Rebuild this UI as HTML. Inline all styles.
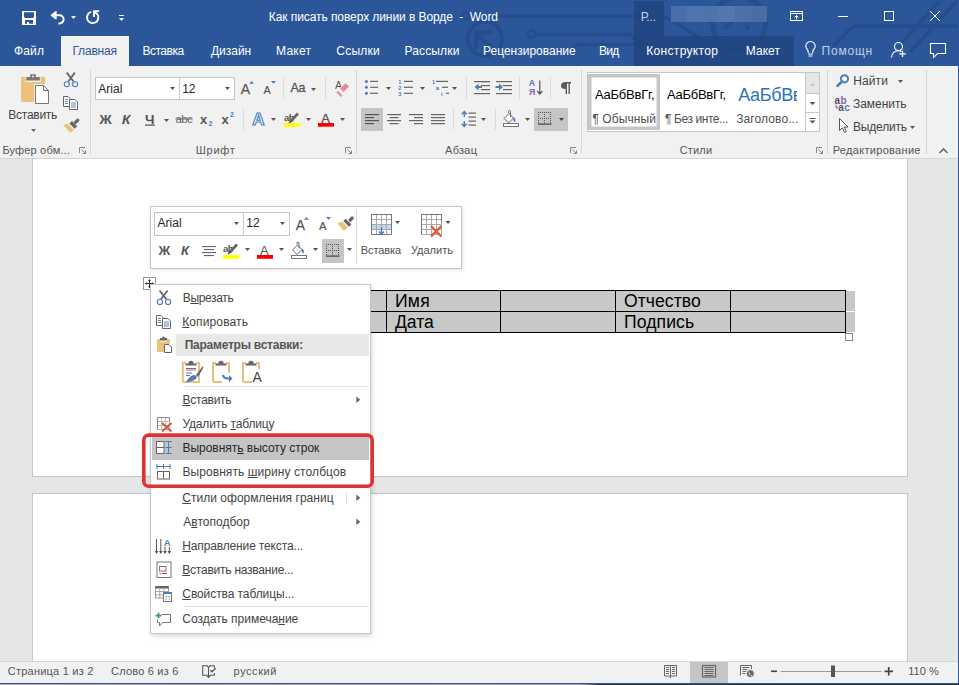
<!DOCTYPE html>
<html><head><meta charset="utf-8">
<style>
*{margin:0;padding:0;box-sizing:border-box}
html,body{width:959px;height:685px;overflow:hidden;background:#1a2a3a}
body{position:relative;font-family:"Liberation Sans",sans-serif;font-size:12px;color:#444}
.a{position:absolute}
.t{position:absolute;white-space:pre}
svg{position:absolute;overflow:visible}
</style></head><body>

<div class="a" style="left:0;top:0;width:959px;height:66px;background:#2b579a"></div>
<svg style="left:0;top:0" width="959" height="66" viewBox="0 0 959 66">
 <g fill="none" stroke="#254d8b" stroke-width="3.5">
  <circle cx="465.6" cy="16.3" r="3.6" stroke-width="2.6"/>
  <path d="M469.2,16.3 H663.7 L712,45"/>
  <circle cx="485" cy="38.8" r="17.2" stroke-width="3.6"/>
  <path d="M477.5,34 L497,53.5" stroke-width="4"/>
  <path d="M476,49 V32.5 H492.5" stroke-width="4"/>
  <circle cx="531.3" cy="34.4" r="3.6" stroke-width="2.6"/>
  <path d="M534.9,34.4 H630 L641,44.6 H668.8"/>
  <path d="M573,48 Q576,44.6 582,44.6 H641"/>
  <circle cx="672.5" cy="44.6" r="3.6" stroke-width="2.6"/>
  <circle cx="739" cy="23.5" r="26.5" stroke-width="5"/>
  <path d="M724,29 L738.8,14.5" stroke-width="5"/>
  <rect x="745" y="25" width="5" height="5" fill="#254d8b" stroke="none"/>
  <path d="M959,26.2 H853 L833,46.4"/>
  <path d="M939.5,1 L901,43.5"/>
  <path d="M957,1 L909.5,52.5"/>
 </g>
</svg>
<svg style="left:0;top:0" width="959" height="66" viewBox="0 0 959 66">
 <path d="M634,1 H664 V36 H794 V66 H634 Z" fill="#1f4580" fill-opacity="0.8"/>
</svg>
<div class="a" style="left:671px;top:6px;width:96px;height:16px;background:#4c70aa;overflow:hidden">
 <div class="a" style="left:0;top:0;width:16px;height:16px;background:#4a6ea9"></div>
 <div class="a" style="left:16px;top:0;width:16px;height:16px;background:#5074ae"></div>
 <div class="a" style="left:32px;top:0;width:16px;height:16px;background:#4f73ac"></div>
 <div class="a" style="left:48px;top:0;width:16px;height:16px;background:#5377b0"></div>
 <div class="a" style="left:64px;top:0;width:16px;height:16px;background:#4d70a8"></div>
 <div class="a" style="left:80px;top:0;width:16px;height:16px;background:#4b6da5"></div>
</div>
<!-- QAT -->
<svg style="left:0;top:0" width="130" height="36" viewBox="0 0 130 36">
 <path d="M22,11 H36 V25 H22 Z M24,12.2 V17 L25,18 H33 L34,17 V12.2 Z M25,20 V23.8 H27 V22 H29 V23.8 H33 V20 Z" fill="#fff" fill-rule="evenodd"/>
 <g fill="none" stroke="#fff" stroke-width="2">
  <path d="M56.2,11.8 L52,15.2 L56.2,18.6"/>
  <path d="M52.5,15.2 H59.5 A4.1,4.1 0 0 1 59.5,23.4 H58.5"/>
  <path d="M91.3,11.9 A5.7,5.7 0 1 0 97.4,14.2 L94.3,11.6" stroke-width="1.9"/>
  <path d="M94,17 V11.1 H99.2" stroke-width="1.9"/>
 </g>
 <path d="M51,15.2 L56.5,10.8 V19.6 Z" fill="#fff"/>
 <path d="M71,16 H76 L73.5,19 Z" fill="#fff"/>
 <rect x="119" y="15" width="5" height="1" fill="#fff"/>
 <path d="M119,18 H124 L121.5,21 Z" fill="#fff"/>
</svg>
<!-- window buttons -->
<svg style="left:780px;top:0" width="179" height="36" viewBox="780 0 179 36">
 <g fill="none" stroke="#fff" stroke-width="1">
  <rect x="790.5" y="11.5" width="12" height="9"/>
  <path d="M790.5,13.5 H802.5"/>
  <path d="M796.5,19.5 V15.5 M794.5,17.5 L796.5,15.5 L798.5,17.5"/>
  <path d="M838,16.5 H848"/>
  <rect x="884.5" y="11.5" width="9" height="9"/>
  <path d="M930,11 L940,21 M940,11 L930,21"/>
 </g>
</svg>

<div class="a" style="left:61px;top:36px;width:68px;height:30px;background:#f1f1f1"></div>
<svg style="left:800px;top:36px" width="159" height="30" viewBox="800 36 159 30">
 <g fill="none" stroke="#fff" stroke-width="1.1">
  <path d="M808.2,53 V51.5 C808.2,49.5 805.8,48.5 805.8,46.2 A4.7,4.7 0 0 1 815.2,46.2 C815.2,48.5 812.8,49.5 812.8,51.5 V53"/>
  <path d="M808,54 H813 M808.5,56 H812.5"/>
  <circle cx="898.5" cy="46.5" r="4"/>
  <path d="M891.5,57.5 C892,53.5 894.5,51 898,50.8 C899.5,50.8 900.5,51.2 901.5,51.8"/>
  <path d="M902.5,50.5 V57 M899.3,53.8 H905.8" stroke-width="1.3"/>
  <path d="M930.5,43.5 H945.5 V53.5 H937.5 L933.5,57.5 V53.5 H930.5 Z"/>
 </g>
</svg>

<div class="a" style="left:0;top:66px;width:958px;height:92px;background:#f1f1f1"></div>
<div class="a" style="left:0;top:158px;width:958px;height:1px;background:#d5d5d5"></div>
<div class="a" style="left:0;top:159px;width:958px;height:502px;background:#e6e6e6"></div>
<div class="a" style="left:32px;top:159px;width:876px;height:318px;background:#fff;border:1px solid #c6c6c6;border-top:none"></div>
<div class="a" style="left:32px;top:493px;width:876px;height:168px;background:#fff;border:1px solid #c6c6c6;border-bottom:none"></div>
<div class="a" style="left:0;top:661px;width:958px;height:22px;background:#f1f1f1;border-top:1px solid #d5d5d5"></div>
<div class="a" style="left:0;top:683px;width:959px;height:1px;background:#2b579a"></div>
<div class="a" style="left:0;top:684px;width:959px;height:1px;background:linear-gradient(90deg,#b3afa8 0,#a8a8a8 580px,#2a3642 600px,#22303c 959px)"></div>
<div class="a" style="left:958px;top:0;width:1px;height:684px;background:#2b579a"></div>
<svg style="left:0;top:66px" width="959" height="92" viewBox="0 66 959 92"><rect x="90" y="70" width="1" height="84" fill="#d6d6d6"/>
<rect x="356" y="70" width="1" height="84" fill="#d6d6d6"/>
<rect x="581" y="70" width="1" height="84" fill="#d6d6d6"/>
<rect x="827" y="70" width="1" height="84" fill="#d6d6d6"/>
<rect x="926" y="70" width="1" height="84" fill="#d6d6d6"/>
<rect x="243" y="108" width="1" height="22" fill="#dcdcdc"/>
<rect x="283" y="77" width="1" height="22" fill="#dcdcdc"/>
<rect x="325" y="77" width="1" height="22" fill="#dcdcdc"/>
<rect x="466" y="77" width="1" height="22" fill="#dcdcdc"/>
<rect x="453" y="108" width="1" height="22" fill="#dcdcdc"/>
<rect x="519" y="77" width="1" height="22" fill="#dcdcdc"/>
<rect x="550" y="77" width="1" height="22" fill="#dcdcdc"/>
<rect x="495" y="108" width="1" height="22" fill="#dcdcdc"/>
<g fill="none" stroke="#888" stroke-width="1"><path d="M79.5,153 V147.5 H85"/><path d="M81.5,149.5 L85.5,153.5 M85.5,150.5 V153.5 H82.5"/></g>
<g fill="none" stroke="#888" stroke-width="1"><path d="M345.5,153 V147.5 H351"/><path d="M347.5,149.5 L351.5,153.5 M351.5,150.5 V153.5 H348.5"/></g>
<g fill="none" stroke="#888" stroke-width="1"><path d="M570.5,153 V147.5 H576"/><path d="M572.5,149.5 L576.5,153.5 M576.5,150.5 V153.5 H573.5"/></g>
<g fill="none" stroke="#888" stroke-width="1"><path d="M816.5,153 V147.5 H822"/><path d="M818.5,149.5 L822.5,153.5 M822.5,150.5 V153.5 H819.5"/></g>
<path d="M939.5,153 L943.5,149 L947.5,153" fill="none" stroke="#666" stroke-width="1.6"/>

<path d="M22.5,76.8 H25.5 V82 H40.7 V76.8 H43.6 Q45.1,76.8 45.1,78.3 V84 H34 V101.9 H22.5 Q21,101.9 21,100.4 V78.3 Q21,76.8 22.5,76.8 Z" fill="#eac27a"/>
<path d="M26.2,77 H30.2 V74.3 H35.8 V77 H39.8 V80.6 H26.2 Z" fill="#777"/>
<circle cx="33" cy="76.6" r="1" fill="#f1f1f1"/>
<path d="M35.5,85.5 H43.5 L48.5,90.5 V103.5 H35.5 Z" fill="#fff" stroke="#777" stroke-width="1"/>
<path d="M43.5,85.5 V90.5 H48.5" fill="none" stroke="#777" stroke-width="1"/>

<path d="M31,129 h5 l-2.5,3 z" fill="#666"/>

<path d="M66.7,72.6 L73.5,81.5 M74.9,72.6 L68.2,81.5" stroke="#666" stroke-width="1.8" fill="none"/>
<circle cx="66.8" cy="84.2" r="2.5" fill="none" stroke="#4a7ebb" stroke-width="1.1"/>
<circle cx="75.1" cy="84.2" r="2.5" fill="none" stroke="#4a7ebb" stroke-width="1.1"/>


<path d="M63.5,96.5 H68 L70,98.5 V106.5 H63.5 Z" fill="#fff" stroke="#666" stroke-width="1"/>
<path d="M69.5,99.5 H75 L77.5,102 V109.5 H69.5 Z" fill="#fff" stroke="#666" stroke-width="1"/>
<path d="M65,99.5 h3 M65,101.5 h3 M65,103.5 h3 M71,103 h5 M71,105 h5 M71,107 h5" stroke="#4a7ebb" stroke-width="0.9"/>


<path d="M75.6,122.3 L77.8,120.1" stroke="#666" stroke-width="3.2" stroke-linecap="round"/>
<path d="M69.4,123.5 L72,121 L77.2,126.2 L74.6,128.7 Z" fill="#666"/>
<path d="M63.3,125.3 L67.6,123.7 L73.9,129.9 L70.3,132.7 Z" fill="#eac27a"/>

<rect x="95.5" y="77.5" width="84" height="22" fill="#fff" stroke="#c6c6c6"/>
<rect x="179.5" y="77.5" width="55" height="22" fill="#fff" stroke="#c6c6c6"/>
<path d="M170,87 h5 l-2.5,3 z" fill="#555"/>
<path d="M225,87 h5 l-2.5,3 z" fill="#555"/>

<text x="240.8" y="94.2" font-family="Liberation Sans" font-size="14" fill="#555" stroke="#555" stroke-width="0.25">A</text>
<path d="M249.2,83.8 L251.6,81 L254,83.8 Z" fill="#4a7ebb"/>
<text x="263.6" y="94.2" font-family="Liberation Sans" font-size="10.8" fill="#555" stroke="#555" stroke-width="0.2">A</text>
<path d="M271,81 H276 L273.5,83.8 Z" fill="#4a7ebb"/>

<text x="290.5" y="92" font-family="Liberation Sans" font-size="12.5" fill="#555" stroke="#555" stroke-width="0.3" letter-spacing="-0.3">Aa</text>
<path d="M311,88 h5 l-2.5,3 z" fill="#555"/>

<text x="335" y="89" font-family="Liberation Sans" font-size="10.5" fill="#555">A</text>
<path d="M339.8,88.6 L345.6,82.8 L349.4,86.6 L343.6,92.4 Z" fill="#e5899a" stroke="#f1f1f1" stroke-width="0.8"/>
<path d="M336.3,92.3 L337.8,90.8 L342.5,95.5 L341,97 Z" fill="#e5899a"/>


<text x="99.5" y="123.5" font-family="Liberation Sans" font-size="13.5" font-weight="700" fill="#555">Ж</text>
<text x="122" y="123.5" font-family="Liberation Sans" font-size="13.5" font-weight="700" font-style="italic" fill="#555">К</text>
<text x="145" y="123.5" font-family="Liberation Sans" font-size="13.5" font-weight="700" fill="#555">Ч</text>
<rect x="145" y="124.5" width="10" height="1.2" fill="#555"/>
<text x="175.5" y="123" font-family="Liberation Sans" font-size="11.5" fill="#666" letter-spacing="-0.6">abc</text>
<rect x="175.5" y="118.5" width="17" height="1" fill="#666"/>
<text x="200" y="123.5" font-family="Liberation Sans" font-size="13" font-weight="700" fill="#555">x</text>
<text x="208.5" y="125.5" font-family="Liberation Sans" font-size="7" font-weight="700" fill="#4a7ebb">2</text>
<text x="221.5" y="123.5" font-family="Liberation Sans" font-size="13" font-weight="700" fill="#555">x</text>
<text x="230" y="117" font-family="Liberation Sans" font-size="7" font-weight="700" fill="#4a7ebb">2</text>

<path d="M164,119 h5 l-2.5,3 z" fill="#555"/>

<text x="252.3" y="125.3" font-family="Liberation Sans" font-size="17" font-weight="700" fill="#fff" stroke="#4a7ebb" stroke-width="1.1">A</text>

<path d="M271,118 h5 l-2.5,3 z" fill="#555"/>

<text x="284" y="120.5" font-family="Liberation Sans" font-size="9.5" font-weight="700" fill="#555" letter-spacing="-0.5">ab</text>
<path d="M290.5,121.5 L298,113.5" stroke="#666" stroke-width="2.6"/>
<path d="M289,123 L291.5,120.5" stroke="#444" stroke-width="1.5"/>
<rect x="284" y="123" width="16.3" height="3.7" fill="#ffff00"/>

<path d="M306,118 h5 l-2.5,3 z" fill="#555"/>

<text x="321.3" y="122.5" font-family="Liberation Sans" font-size="13" fill="#555" stroke="#555" stroke-width="0.3">A</text>
<rect x="318" y="123" width="16" height="3.7" fill="#ff0000"/>

<path d="M340,118 h5 l-2.5,3 z" fill="#555"/>
<circle cx="366.4" cy="81.4" r="1.5" fill="#4a7ebb"/><circle cx="366.4" cy="87.3" r="1.5" fill="#4a7ebb"/><circle cx="366.4" cy="93.3" r="1.5" fill="#4a7ebb"/>
<rect x="370" y="80.8" width="8" height="1.2" fill="#666"/><rect x="370" y="86.7" width="8" height="1.2" fill="#666"/><rect x="370" y="92.7" width="8" height="1.2" fill="#666"/>
<path d="M386,87 h5 l-2.5,3 z" fill="#555"/>
<text x="398.3" y="84" font-family="Liberation Sans" font-size="5.5" font-weight="700" fill="#4a7ebb">1</text><text x="398.3" y="90" font-family="Liberation Sans" font-size="5.5" font-weight="700" fill="#4a7ebb">2</text><text x="398.3" y="96" font-family="Liberation Sans" font-size="5.5" font-weight="700" fill="#4a7ebb">3</text>
<rect x="404" y="80.8" width="9" height="1.2" fill="#666"/><rect x="404" y="86.7" width="9" height="1.2" fill="#666"/><rect x="404" y="92.7" width="9" height="1.2" fill="#666"/>
<path d="M420,87 h5 l-2.5,3 z" fill="#555"/>
<text x="432" y="84" font-family="Liberation Sans" font-size="5.5" font-weight="700" fill="#4a7ebb">1</text><text x="435.8" y="90" font-family="Liberation Sans" font-size="6" font-weight="700" fill="#4a7ebb">a</text><text x="441" y="96" font-family="Liberation Sans" font-size="5.5" font-weight="700" fill="#4a7ebb">i</text>
<rect x="436" y="80.8" width="12" height="1.2" fill="#666"/><rect x="442" y="86.7" width="6" height="1.2" fill="#666"/><rect x="446" y="92.7" width="3" height="1.2" fill="#666"/>
<path d="M452,87 h5 l-2.5,3 z" fill="#555"/>
<rect x="481" y="81" width="9" height="1.2" fill="#666"/><rect x="481" y="85" width="9" height="1.2" fill="#666"/><rect x="481" y="89" width="9" height="1.2" fill="#666"/><rect x="474" y="93" width="16" height="1.2" fill="#666"/>
<rect x="474" y="81" width="16" height="1.2" fill="#666"/>
<path d="M474.5,87 L478.5,83.5 V86 H482 V88 H478.5 V90.5 Z" fill="#4a7ebb"/>
<rect x="503" y="85" width="9" height="1.2" fill="#666"/><rect x="503" y="89" width="9" height="1.2" fill="#666"/><rect x="496" y="81" width="16" height="1.2" fill="#666"/><rect x="496" y="93" width="16" height="1.2" fill="#666"/>
<path d="M503,87 L499,83.5 V86 H495.5 V88 H499 V90.5 Z" fill="#4a7ebb"/>
<text x="528.8" y="86.4" font-family="Liberation Sans" font-size="8.8" font-weight="700" fill="#4a7ebb">A</text><text x="529" y="94.8" font-family="Liberation Sans" font-size="8.8" font-weight="700" fill="#8a5bb5">Я</text>
<path d="M539.8,80.5 V94 M537.2,91 L539.8,94 L542.4,91" fill="none" stroke="#555" stroke-width="1.2"/>
<path d="M566,82 H571 V83.4 H569.9 V94 H568.5 V83.4 H567 V94 H565.6 V89 Q561,89 561,85.5 Q561,82 566,82 Z" fill="#5a5a5a"/>
<rect x="361" y="108" width="22" height="23" fill="#c5c5c5"/>
<rect x="365" y="114" width="14" height="1.2" fill="#555"/><rect x="365" y="120" width="14" height="1.2" fill="#555"/><rect x="365" y="117" width="9" height="1.2" fill="#555"/><rect x="365" y="123" width="9" height="1.2" fill="#555"/>
<rect x="387" y="114" width="14" height="1.2" fill="#666"/><rect x="387" y="120" width="14" height="1.2" fill="#666"/><rect x="389.5" y="117" width="9" height="1.2" fill="#666"/><rect x="389.5" y="123" width="9" height="1.2" fill="#666"/>
<rect x="409" y="114" width="14" height="1.2" fill="#666"/><rect x="409" y="120" width="14" height="1.2" fill="#666"/><rect x="414" y="117" width="9" height="1.2" fill="#666"/><rect x="414" y="123" width="9" height="1.2" fill="#666"/>
<rect x="431" y="114" width="14" height="1.2" fill="#666"/><rect x="431" y="117" width="14" height="1.2" fill="#666"/><rect x="431" y="120" width="14" height="1.2" fill="#666"/><rect x="431" y="123" width="14" height="1.2" fill="#666"/>
<rect x="468.5" y="112.5" width="7.5" height="1.2" fill="#666"/><rect x="468.5" y="116.5" width="7.5" height="1.2" fill="#666"/><rect x="468.5" y="120.5" width="7.5" height="1.2" fill="#666"/><rect x="468.5" y="124.5" width="7.5" height="1.2" fill="#666"/>
<path d="M464.3,111.8 V117 M464.3,121 V126.2 M461.8,114.3 L464.3,111.6 L466.8,114.3 M461.8,123.7 L464.3,126.4 L466.8,123.7" fill="none" stroke="#4a7ebb" stroke-width="1.4"/>
<path d="M481,118 h5 l-2.5,3 z" fill="#555"/>
<path d="M504,118.5 L509,113.5 L513.5,118 L508.5,123 Z" fill="#fff" stroke="#666" stroke-width="1"/>
<path d="M508.5,113 V111.5 Q508.5,110.5 509.5,110.5 Q510.5,110.5 510.5,111.5 V117" fill="none" stroke="#666" stroke-width="1"/>
<path d="M513.5,117 Q516.5,119 515,122 Q512.5,121 513.5,117 Z" fill="#4a7ebb"/>
<rect x="503.5" y="123.5" width="15" height="3" fill="#fff" stroke="#777"/>
<path d="M525,118 h5 l-2.5,3 z" fill="#555"/>
<rect x="534" y="108" width="34" height="23" fill="#c5c5c5"/>
<g fill="none" stroke="#555" stroke-width="1" stroke-dasharray="1,1"><path d="M538.5,112 V124 M550.5,112 V124 M538,112.5 H551 M544.5,112 V124 M538,118.5 H551"/></g>
<rect x="538" y="123.5" width="13.5" height="1.2" fill="#444"/>
<path d="M559,118 h5 l-2.5,3 z" fill="#444"/>
<rect x="587.5" y="72.5" width="232" height="59" fill="#fff" stroke="#c6c6c6"/>
<rect x="589.75" y="75.75" width="68.5" height="52.5" fill="none" stroke="#c6c6c6" stroke-width="3.5"/>
<rect x="805.5" y="72.5" width="14" height="59" fill="#fff" stroke="#c6c6c6"/>
<rect x="806" y="73" width="13" height="20" fill="#e6e6e6"/>
<path d="M805.5,93.5 H819.5 M805.5,112.5 H819.5" stroke="#c6c6c6"/>
<path d="M809.5,86 L812.5,83 L815.5,86 Z" fill="#c6c6c6"/>
<path d="M809.5,102 H815.5 L812.5,105 Z" fill="#555"/>
<rect x="809.5" y="118" width="6" height="1" fill="#555"/><path d="M809.5,120.5 H815.5 L812.5,123.5 Z" fill="#555"/>
<circle cx="844.5" cy="78.8" r="3.6" fill="none" stroke="#4a7ebb" stroke-width="2"/><path d="M842,81.6 L837.5,85.8" stroke="#4a7ebb" stroke-width="2.6" stroke-linecap="round"/>
<path d="M898,80 h5 l-2.5,3 z" fill="#555"/>
<text x="834.5" y="103.5" font-family="Liberation Sans" font-size="10" font-weight="700" fill="#555">a</text><text x="840.6" y="103.5" font-family="Liberation Sans" font-size="10" font-weight="700" fill="#8a5bb5">b</text><text x="838.3" y="110.5" font-family="Liberation Sans" font-size="10" font-weight="700" fill="#555">a</text><text x="844.2" y="110.5" font-family="Liberation Sans" font-size="10" font-weight="700" fill="#4a7ebb">c</text>
<path d="M836,104.5 V107.5 H838 M836.6,106.6 L838,107.5 L836.6,108.4" fill="none" stroke="#4a7ebb" stroke-width="0.9"/>
<path d="M839.5,118.5 V130.5 L842.3,127.8 L844.5,132.5 L846.3,131.6 L844.1,127 H848 Z" fill="#fff" stroke="#555" stroke-width="1"/>
<path d="M910,126 h5 l-2.5,3 z" fill="#555"/></svg><div class="a" style="left:737px;top:80px;width:60px;height:28px;overflow:hidden"><div class="t" style="left:1.2px;top:5.5px;font-size:18px;line-height:18px;color:#2e74b5;letter-spacing:-0.35px">АаБбВвГг</div></div><div class="a" style="left:150px;top:284px;width:221px;height:350px;box-shadow:1px 2px 5px rgba(0,0,0,0.16)"></div><div class="a" style="left:150px;top:206px;width:312px;height:63px;box-shadow:1px 1px 4px rgba(0,0,0,0.12)"></div><svg style="left:0;top:159px" width="958" height="502" viewBox="0 159 958 502"><rect x="271" y="290" width="574" height="42" fill="#c8c8c8"/>
<g fill="#000">
<rect x="271" y="290" width="575" height="1"/>
<rect x="271" y="311" width="575" height="1"/>
<rect x="271" y="332" width="575" height="1"/>
<rect x="386" y="290" width="1" height="43"/>
<rect x="500" y="290" width="1" height="43"/>
<rect x="615" y="290" width="1" height="43"/>
<rect x="730" y="290" width="1" height="43"/>
<rect x="845" y="290" width="1" height="43"/>
</g>
<rect x="846" y="291" width="9" height="20" fill="#c8c8c8"/><rect x="846" y="312" width="9" height="20" fill="#c8c8c8"/>
<rect x="845.5" y="333.5" width="7" height="7" fill="#fff" stroke="#888"/>
<rect x="143.5" y="277.5" width="12" height="12" fill="#fff" stroke="#999"/>
<path d="M149.5,279.5 V288 M145.5,283.5 H153.5" stroke="#333" stroke-width="1"/><path d="M148,281 L149.5,279.3 L151,281 Z M148,286 L149.5,287.7 L151,286 Z M147,282 L145.3,283.5 L147,285 Z M152,282 L153.7,283.5 L152,285 Z" fill="#333"/>
<rect x="150.5" y="206.5" width="311" height="62" fill="#fff" stroke="#c6c6c6"/>
<rect x="154.5" y="212.5" width="89" height="23" fill="#fff" stroke="#c6c6c6"/>
<rect x="243.5" y="212.5" width="46" height="23" fill="#fff" stroke="#c6c6c6"/>
<path d="M234,222 h5 l-2.5,3 z" fill="#555"/>
<path d="M280,222 h5 l-2.5,3 z" fill="#555"/>

<text x="295.8" y="230" font-family="Liberation Sans" font-size="13.8" fill="#555" stroke="#555" stroke-width="0.25">A</text>
<path d="M303.8,219.8 L306.4,216.9 L309,219.8 Z" fill="#4a7ebb"/>
<text x="318.9" y="230" font-family="Liberation Sans" font-size="11.2" fill="#555" stroke="#555" stroke-width="0.2">A</text>
<path d="M326,216.9 H331 L328.5,219.8 Z" fill="#4a7ebb"/>
<path d="M350.2,220 L352.2,218" stroke="#666" stroke-width="3.2" stroke-linecap="round"/>
<path d="M343.3,221.1 L345.6,218.8 L351.3,224.5 L349,226.8 Z" fill="#666"/>
<path d="M337.2,223.5 L342,221.5 L347.8,227.3 L344,231 Z" fill="#eac27a"/>


<text x="158.5" y="255" font-family="Liberation Sans" font-size="13" font-weight="700" fill="#555">Ж</text>
<text x="181" y="255" font-family="Liberation Sans" font-size="13" font-weight="700" font-style="italic" fill="#555">К</text>

<rect x="202" y="246" width="14" height="1.1" fill="#666"/><rect x="204" y="249" width="10" height="1.1" fill="#666"/><rect x="202" y="252" width="14" height="1.1" fill="#666"/><rect x="204" y="255" width="10" height="1.1" fill="#666"/>

<text x="223" y="251.5" font-family="Liberation Sans" font-size="9.5" font-weight="700" fill="#555" letter-spacing="-0.5">ab</text>
<path d="M229.5,252.5 L237,244.5" stroke="#666" stroke-width="2.6"/>
<path d="M228,254 L230.5,251.5" stroke="#444" stroke-width="1.5"/>
<rect x="223" y="255" width="16.3" height="3.8" fill="#ffff00"/>
<text x="260" y="254.5" font-family="Liberation Sans" font-size="13" fill="#555">A</text>
<rect x="257" y="255" width="16" height="3.8" fill="#ff0000"/>

<path d="M245,248 h5 l-2.5,3 z" fill="#555"/>
<path d="M279,248 h5 l-2.5,3 z" fill="#555"/>
<path d="M313,248 h5 l-2.5,3 z" fill="#555"/>
<path d="M347,248 h5 l-2.5,3 z" fill="#555"/>

<path d="M292.5,250 L297.5,245 L302,249.5 L297,254.5 Z" fill="#fff" stroke="#666" stroke-width="1"/>
<path d="M297,244.5 V243 Q297,242 298,242 Q299,242 299,243 V248.5" fill="none" stroke="#666" stroke-width="1"/>
<path d="M302,248.5 Q305,250.5 303.5,253.5 Q301,252.5 302,248.5 Z" fill="#4a7ebb"/>
<rect x="291.5" y="255.5" width="15" height="3" fill="#fff" stroke="#777"/>

<rect x="322" y="239" width="22" height="24" fill="#c5c5c5"/>
<g fill="none" stroke="#555" stroke-width="1" stroke-dasharray="1,1"><path d="M326.5,244 V256 M338.5,244 V256 M326,244.5 H339 M332.5,244 V256 M326,250.5 H339"/></g>
<rect x="326" y="255.5" width="13.5" height="1.2" fill="#444"/>
<rect x="356" y="210" width="1" height="54" fill="#dcdcdc"/>
<rect x="372" y="225" width="19" height="4.5" fill="#c4d6ec"/>
<g fill="none" stroke="#aaa" stroke-width="1"><path d="M371.5,214.5 V234.5" /><path d="M376.5,214.5 V234.5" /><path d="M381.5,214.5 V234.5" /><path d="M386.5,214.5 V234.5" /><path d="M391.5,214.5 V234.5" /><path d="M371.5,214.5 H391.5" /><path d="M371.5,219.5 H391.5" /><path d="M371.5,224.5 H391.5" /><path d="M371.5,229.5 H391.5" /><path d="M371.5,234.5 H391.5" /></g>
<rect x="371.5" y="214.5" width="20" height="20" fill="none" stroke="#777"/>
<path d="M381.5,227 V234 M379,231.5 L381.5,234.3 L384,231.5" fill="none" stroke="#4a7ebb" stroke-width="1.4"/>
<path d="M395,221 h5 l-2.5,3 z" fill="#555"/>
<g fill="none" stroke="#aaa" stroke-width="1"><path d="M421.5,214.5 V234.5" /><path d="M426.5,214.5 V234.5" /><path d="M431.5,214.5 V234.5" /><path d="M436.5,214.5 V234.5" /><path d="M441.5,214.5 V234.5" /><path d="M421.5,214.5 H441.5" /><path d="M421.5,219.5 H441.5" /><path d="M421.5,224.5 H441.5" /><path d="M421.5,229.5 H441.5" /><path d="M421.5,234.5 H441.5" /></g>
<path d="M421.5,234.5 V214.5 H441.5 V222" fill="none" stroke="#777"/>
<path d="M431,226 L441.5,236.5 M441.5,226 L431,236.5" stroke="#e05a3a" stroke-width="2.4"/>
<path d="M445.5,221 h5 l-2.5,3 z" fill="#555"/>
<rect x="150.5" y="284.5" width="220" height="349" fill="#fff" stroke="#c6c6c6"/>

<path d="M159.5,290.5 L166.3,299.3 M167.7,290.5 L161,299.3" stroke="#666" stroke-width="1.8" fill="none"/>
<circle cx="159.9" cy="301.9" r="2.6" fill="none" stroke="#4a7ebb" stroke-width="1.1"/>
<circle cx="168.1" cy="301.9" r="2.6" fill="none" stroke="#4a7ebb" stroke-width="1.1"/>


<path d="M156.5,315.5 H161 L163,317.5 V325.5 H156.5 Z" fill="#fff" stroke="#666" stroke-width="1"/>
<path d="M162.5,318.5 H168 L170.5,321 V328.5 H162.5 Z" fill="#fff" stroke="#666" stroke-width="1"/>
<path d="M158,318.5 h3 M158,320.5 h3 M158,322.5 h3 M164,322 h5 M164,324 h5 M164,326 h5" stroke="#4a7ebb" stroke-width="0.9"/>

<rect x="176" y="334" width="193" height="22" fill="#e8e8e8"/>

<path d="M158,339 H160 V341.5 H167 V339 H169 Q170,339 170,340 V344 H164 V352 H158 Q157,352 157,351 V340 Q157,339 158,339 Z" fill="#eac27a"/>
<path d="M160,338 H162.3 V336.8 H164.8 V338 H167 V340.6 H160 Z" fill="#666"/>
<path d="M164.5,344.5 H169 L171.5,347 V352.5 H164.5 Z" fill="#fff" stroke="#666" stroke-width="1"/>

<rect x="183" y="364" width="15" height="17" fill="#fff"/>
<path d="M182.8,382 V363 H186 M196,363 H199 V382 H182.8" fill="none" stroke="#eac27a" stroke-width="2"/>
<path d="M185.5,363.5 H188.5 V362 Q191,359.5 193.5,362 V363.5 H196.5 V365.5 H185.5 Z" fill="#666"/>
<path d="M186,368.5 H196 M186,373 H192 M186,375.5 H190" stroke="#4a7ebb" stroke-width="1"/>
<path d="M186,370.5 l1,-1 l1,1 l1,-1 l1,1 l1,-1 l1,1 l1,-1 l1,1 l1,-1 l1,1" fill="none" stroke="#d33" stroke-width="0.9"/>
<path d="M196,375 L202.7,366.3 L203.5,367.5 L198,377 Z" fill="#666"/>
<path d="M186,382.5 Q189,376 194,375 Q198,375.5 196,379 Q192,382 186,382.5 Z" fill="#4a7ebb"/>
<path d="M213,382 V363 H216 M226,363 H229 V373 M213,382 H222" fill="none" stroke="#eac27a" stroke-width="2"/>
<path d="M215.5,363.5 H218.5 V362 Q221,359.5 223.5,362 V363.5 H226.5 V365.5 H215.5 Z" fill="#666"/>
<path d="M223,375 Q223.5,378.5 228,378.5 H230" fill="none" stroke="#4a7ebb" stroke-width="2"/><path d="M229,375 L232.5,378.6 L229,382 Z" fill="#4a7ebb"/>
<path d="M243,382 V363 H246 M256,363 H259 V369 M243,382 H252" fill="none" stroke="#eac27a" stroke-width="2"/>
<path d="M245.5,363.5 H248.5 V362 Q251,359.5 253.5,362 V363.5 H256.5 V365.5 H245.5 Z" fill="#666"/>
<text x="252.5" y="381.8" font-family="Liberation Sans" font-size="14" fill="#444">A</text>
<rect x="184" y="386" width="185" height="1" fill="#e2e2e6"/>
<path d="M356.3,396.5 L360.3,399.8 L356.3,403.1 Z" fill="#666"/>
<path d="M356.3,494.5 L360.3,497.8 L356.3,501.1 Z" fill="#666"/>
<path d="M356.3,518.5 L360.3,521.8 L356.3,525.1 Z" fill="#666"/>
<rect x="346" y="492" width="1" height="12" fill="#e0e0e0"/>
<g fill="none" stroke="#bbb" stroke-width="1"><path d="M157.5,417.5 V429.5"/><path d="M157.5,417.5 H169.5"/><path d="M161.5,417.5 V429.5"/><path d="M157.5,421.5 H169.5"/><path d="M165.5,417.5 V429.5"/><path d="M157.5,425.5 H169.5"/><path d="M169.5,417.5 V429.5"/><path d="M157.5,429.5 H169.5"/></g>
<path d="M157.5,429.5 V417.5 H169.5 V421" fill="none" stroke="#888"/>
<path d="M162,423 L171.5,431.5 M171.5,423 L162,431.5" stroke="#e05a3a" stroke-width="2.2"/>
<rect x="152" y="436" width="217" height="24" fill="#c5c5c5"/>
<rect x="156.5" y="441.5" width="7.5" height="12" fill="#fff" stroke="#666"/><path d="M156.5,447.5 H164" stroke="#666"/>
<path d="M168.5,441 V454 M165.3,441.5 H171.8 M165.3,447.5 H171.8 M165.3,453.5 H171.8" stroke="#4a7ebb" stroke-width="1"/>
<path d="M156,466.5 H170.8 M157,464 V469 M163.5,464 V469 M170,464 V469" stroke="#4a7ebb" stroke-width="1"/>
<rect x="157.5" y="471.5" width="12" height="7.5" fill="#fff" stroke="#666"/><path d="M163.5,471.5 V479" stroke="#666"/>
<rect x="143.8" y="435.1" width="228.4" height="51.2" rx="5" fill="none" stroke="#e03232" stroke-width="3.6"/>
<g stroke="#555" stroke-width="1" fill="none"><path d="M156.5,539 V553 M160.8,539 V553 M165,547 V553 M169.3,547 V553"/></g>
<path d="M154.7,551 L156.5,554 L158.3,551 Z" fill="#555"/><path d="M159.0,551 L160.8,554 L162.60000000000002,551 Z" fill="#555"/><path d="M163.2,551 L165,554 L166.8,551 Z" fill="#555"/><path d="M167.5,551 L169.3,554 L171.10000000000002,551 Z" fill="#555"/>
<text x="163.8" y="546" font-family="Liberation Sans" font-size="9.5" font-weight="700" fill="#4a7ebb">A</text>
<rect x="157" y="562" width="14" height="15.5" fill="#fff" stroke="#777"/>
<rect x="159.5" y="566.5" width="6.5" height="4.5" fill="#fff" stroke="#777"/>
<path d="M159.5,573.5 H160.8 M162,573.5 H167" stroke="#d33" stroke-width="1"/>
<rect x="155.5" y="586.5" width="13" height="11.5" fill="#fff" stroke="#999"/><rect x="155.5" y="586" width="13" height="2.5" fill="#666"/>
<path d="M155.5,591.5 H168 M155.5,594.8 H168 M159.8,588 V598 M164,588 V598" stroke="#aaa"/>
<rect x="163.5" y="592.5" width="8" height="9" fill="#fff" stroke="#777"/><rect x="163.5" y="592" width="8.5" height="2" fill="#4a7ebb"/>
<path d="M165.5,596.5 h1.5 M168.5,596.5 h1.5 M165.5,599 h1.5 M168.5,599 h1.5" stroke="#888"/>
<rect x="184" y="606" width="185" height="1" fill="#e2e2e2"/>
<path d="M157.5,614.5 H170.5 V622.5 H162.5 L159.5,626 V622.5 H157.5 Z" fill="#fff" stroke="#777" stroke-width="1"/>
<rect x="155.5" y="612.5" width="6" height="7" fill="#fff"/>
<path d="M158.5,612.8 V618.5 M155.6,615.6 H161.4" stroke="#3b9a6b" stroke-width="1.7"/></svg><svg style="left:0;top:661px" width="958" height="22" viewBox="0 661 958 22"><g fill="none" stroke="#555" stroke-width="1.05"><path d="M207.5,665.7 H202.7 V675.3 H207.5 M209.5,665.7 H214.3 V668 M214.3,673 V675.3 H209.5 M208.5,667 V677"/><path d="M206.8,665.7 L208.5,667.3 L210.2,665.7 M206.8,675.6 L208.5,677.4 L210.2,675.6"/><path d="M210.4,670.2 L212,671.8 L215.6,668.3" stroke-width="1.3"/></g><rect x="690" y="662" width="38" height="21" fill="#c5c5c5"/><g fill="none" stroke="#666" stroke-width="1"><path d="M664.5,665.5 H670.5 V676 H664.5 Z M670.5,665.5 H676.5 V676 H670.5 Z M670.5,676 V678"/><path d="M666,667.5 h3 M666,669.5 h3 M666,671.5 h3 M666,673.5 h3 M672,667.5 h3 M672,669.5 h3 M672,671.5 h3 M672,673.5 h3"/><rect x="702.5" y="665.5" width="13" height="11.5" stroke-width="1.2"/><path d="M704.5,667.5 h9 M704.5,669.5 h9 M704.5,671.5 h9 M704.5,673.5 h9 M704.5,675.5 h9"/><path d="M740.5,675.5 V665.5 H751.5 V669 M742.5,667.5 h7 M742.5,669.5 h5 M742.5,671.5 h4 M742.5,673.5 h3"/></g><circle cx="750.3" cy="673.6" r="4" fill="#666" stroke="#f1f1f1" stroke-width="1"/><path d="M748,671.5 Q750,672.5 749.5,674.5 Q751.5,675 752,677" stroke="#ddd" stroke-width="0.9" fill="none"/><rect x="771" y="670.5" width="6" height="1.6" fill="#444"/><rect x="780.5" y="671" width="101" height="1" fill="#999"/><rect x="831" y="665.5" width="4" height="11.5" fill="#555"/><path d="M884.5,671.3 H893 M888.7,667 V675.6" stroke="#444" stroke-width="1.7"/></svg><div class="t" style="left:268.80px;top:11.00px;font-size:12px;color:#ffffff;letter-spacing:-0.077px;line-height:12px">Как писать поверх линии в Ворде  -  Word</div>
<div class="t" style="left:640.70px;top:11.00px;font-size:12px;color:#c8d2e4;letter-spacing:-0.133px;line-height:12px">Р...</div>
<div class="t" style="left:14.00px;top:45.00px;font-size:12px;color:#ffffff;letter-spacing:0.133px;line-height:12px">Файл</div>
<div class="t" style="left:72.50px;top:45.00px;font-size:12px;color:#2b579a;letter-spacing:-0.200px;line-height:12px">Главная</div>
<div class="t" style="left:142.50px;top:45.00px;font-size:12px;color:#ffffff;letter-spacing:-0.500px;line-height:12px">Вставка</div>
<div class="t" style="left:210.90px;top:45.00px;font-size:12px;color:#ffffff;letter-spacing:0.000px;line-height:12px">Дизайн</div>
<div class="t" style="left:276.00px;top:45.00px;font-size:12px;color:#ffffff;letter-spacing:0.250px;line-height:12px">Макет</div>
<div class="t" style="left:336.30px;top:45.00px;font-size:12px;color:#ffffff;letter-spacing:0.220px;line-height:12px">Ссылки</div>
<div class="t" style="left:404.40px;top:45.00px;font-size:12px;color:#ffffff;letter-spacing:0.157px;line-height:12px">Рассылки</div>
<div class="t" style="left:483.00px;top:45.00px;font-size:12px;color:#ffffff;letter-spacing:0.000px;line-height:12px">Рецензирование</div>
<div class="t" style="left:599.00px;top:45.00px;font-size:12px;color:#ffffff;letter-spacing:-0.700px;line-height:12px">Вид</div>
<div class="t" style="left:646.30px;top:45.00px;font-size:12px;color:#ffffff;letter-spacing:0.310px;line-height:12px">Конструктор</div>
<div class="t" style="left:745.70px;top:45.00px;font-size:12px;color:#ffffff;letter-spacing:0.075px;line-height:12px">Макет</div>
<div class="t" style="left:821.60px;top:45.00px;font-size:12px;color:#c3cfe2;letter-spacing:0.780px;line-height:12px">Помощн</div>
<div class="t" style="left:8.30px;top:109.00px;font-size:12px;color:#444444;letter-spacing:-0.257px;line-height:12px">Вставить</div>
<div class="t" style="left:2.40px;top:145.00px;font-size:11px;color:#555;letter-spacing:0.173px;line-height:11px">Буфер обм...</div>
<div class="t" style="left:98.30px;top:83.00px;font-size:12px;color:#262626;letter-spacing:0.000px;line-height:12px">Arial</div>
<div class="t" style="left:182.20px;top:83.00px;font-size:12px;color:#262626;letter-spacing:0.000px;line-height:12px">12</div>
<div class="t" style="left:195.70px;top:145.00px;font-size:11px;color:#555;letter-spacing:0.750px;line-height:11px">Шрифт</div>
<div class="t" style="left:445.10px;top:145.00px;font-size:11px;color:#555;letter-spacing:0.275px;line-height:11px">Абзац</div>
<div class="t" style="left:595.00px;top:88.00px;font-size:13px;color:#000;letter-spacing:-0.237px;line-height:13px">АаБбВвГг,</div>
<div class="t" style="left:592.40px;top:113.00px;font-size:12px;color:#505050;letter-spacing:0.100px;line-height:12px">¶ Обычный</div>
<div class="t" style="left:667.00px;top:88.00px;font-size:13px;color:#000;letter-spacing:-0.275px;line-height:13px">АаБбВвГг,</div>
<div class="t" style="left:665.00px;top:113.00px;font-size:12px;color:#505050;letter-spacing:-0.417px;line-height:12px">¶ Без инте...</div>
<div class="t" style="left:736.20px;top:113.00px;font-size:12px;color:#505050;letter-spacing:0.100px;line-height:12px">Заголово...</div>
<div class="t" style="left:679.70px;top:145.00px;font-size:11px;color:#555;letter-spacing:0.175px;line-height:11px">Стили</div>
<div class="t" style="left:853.30px;top:75.00px;font-size:12px;color:#444444;letter-spacing:0.075px;line-height:12px">Найти</div>
<div class="t" style="left:853.00px;top:98.00px;font-size:12px;color:#444444;letter-spacing:-0.043px;line-height:12px">Заменить</div>
<div class="t" style="left:853.00px;top:121.00px;font-size:12px;color:#444444;letter-spacing:-0.186px;line-height:12px">Выделить</div>
<div class="t" style="left:832.70px;top:145.00px;font-size:11px;color:#555;letter-spacing:0.308px;line-height:11px">Редактирование</div>
<div class="t" style="left:157.50px;top:217.00px;font-size:12px;color:#262626;letter-spacing:0.025px;line-height:12px">Arial</div>
<div class="t" style="left:246.30px;top:217.00px;font-size:12px;color:#262626;letter-spacing:0.000px;line-height:12px">12</div>
<div class="t" style="left:360.75px;top:245.00px;font-size:11px;color:#505050;letter-spacing:-0.083px;line-height:11px">Вставка</div>
<div class="t" style="left:411.00px;top:245.00px;font-size:11px;color:#505050;letter-spacing:-0.017px;line-height:11px">Удалить</div>
<div class="t" style="left:395.00px;top:293.00px;font-size:17.6px;color:#000;letter-spacing:0.200px;line-height:17.6px">Имя</div>
<div class="t" style="left:394.90px;top:314.00px;font-size:17.6px;color:#000;letter-spacing:0.000px;line-height:17.6px">Дата</div>
<div class="t" style="left:624.00px;top:293.00px;font-size:17.6px;color:#000;letter-spacing:0.043px;line-height:17.6px">Отчество</div>
<div class="t" style="left:624.00px;top:314.00px;font-size:17.6px;color:#000;letter-spacing:0.083px;line-height:17.6px">Подпись</div>
<div class="t" style="left:182.75px;top:292.00px;font-size:12px;color:#444444;letter-spacing:-0.350px;line-height:12px">В<span style="text-decoration:underline;text-underline-offset:1px">ы</span>резать</div>
<div class="t" style="left:182.20px;top:316.00px;font-size:12px;color:#444444;letter-spacing:0.122px;line-height:12px"><span style="text-decoration:underline;text-underline-offset:1px">К</span>опировать</div>
<div class="t" style="left:184.70px;top:339.00px;font-size:12px;color:#555;letter-spacing:-0.235px;font-weight:700;line-height:12px">Параметры вставки:</div>
<div class="t" style="left:182.60px;top:394.00px;font-size:12px;color:#444444;letter-spacing:-0.271px;line-height:12px"><span style="text-decoration:underline;text-underline-offset:1px">В</span>ставить</div>
<div class="t" style="left:182.40px;top:418.00px;font-size:12px;color:#444444;letter-spacing:-0.136px;line-height:12px">Удалить <span style="text-decoration:underline;text-underline-offset:1px">т</span>аблицу</div>
<div class="t" style="left:182.40px;top:442.00px;font-size:12px;color:#262626;letter-spacing:-0.014px;line-height:12px">Выровнят<span style="text-decoration:underline;text-underline-offset:1px">ь</span> высоту строк</div>
<div class="t" style="left:182.40px;top:466.00px;font-size:12px;color:#444444;letter-spacing:0.083px;line-height:12px">Выровнять <span style="text-decoration:underline;text-underline-offset:1px">ш</span>ирину столбцов</div>
<div class="t" style="left:182.30px;top:492.00px;font-size:12px;color:#444444;letter-spacing:0.018px;line-height:12px"><span style="text-decoration:underline;text-underline-offset:1px">С</span>тили оформления границ</div>
<div class="t" style="left:183.30px;top:516.00px;font-size:12px;color:#444444;letter-spacing:0.011px;line-height:12px">А<span style="text-decoration:underline;text-underline-offset:1px">в</span>топодбор</div>
<div class="t" style="left:182.30px;top:540.00px;font-size:12px;color:#444444;letter-spacing:-0.145px;line-height:12px"><span style="text-decoration:underline;text-underline-offset:1px">Н</span>аправление текста...</div>
<div class="t" style="left:182.30px;top:564.00px;font-size:12px;color:#444444;letter-spacing:-0.237px;line-height:12px"><span style="text-decoration:underline;text-underline-offset:1px">В</span>ставить название...</div>
<div class="t" style="left:182.30px;top:588.00px;font-size:12px;color:#444444;letter-spacing:-0.089px;line-height:12px"><span style="text-decoration:underline;text-underline-offset:1px">С</span>войства таблицы...</div>
<div class="t" style="left:182.30px;top:613.00px;font-size:12px;color:#444444;letter-spacing:-0.018px;line-height:12px">Создать примеча<span style="text-decoration:underline;text-underline-offset:1px">н</span>ие</div>
<div class="t" style="left:7.80px;top:666.00px;font-size:11px;color:#555;letter-spacing:0.221px;line-height:11px">Страница 1 из 2</div>
<div class="t" style="left:111.00px;top:666.00px;font-size:11px;color:#555;letter-spacing:0.209px;line-height:11px">Слово 6 из 6</div>
<div class="t" style="left:233.60px;top:666.00px;font-size:11px;color:#555;letter-spacing:0.550px;line-height:11px">русский</div>
<div class="t" style="left:908.30px;top:666.00px;font-size:11px;color:#555;letter-spacing:0.000px;line-height:11px">110 %</div>
</body></html>
